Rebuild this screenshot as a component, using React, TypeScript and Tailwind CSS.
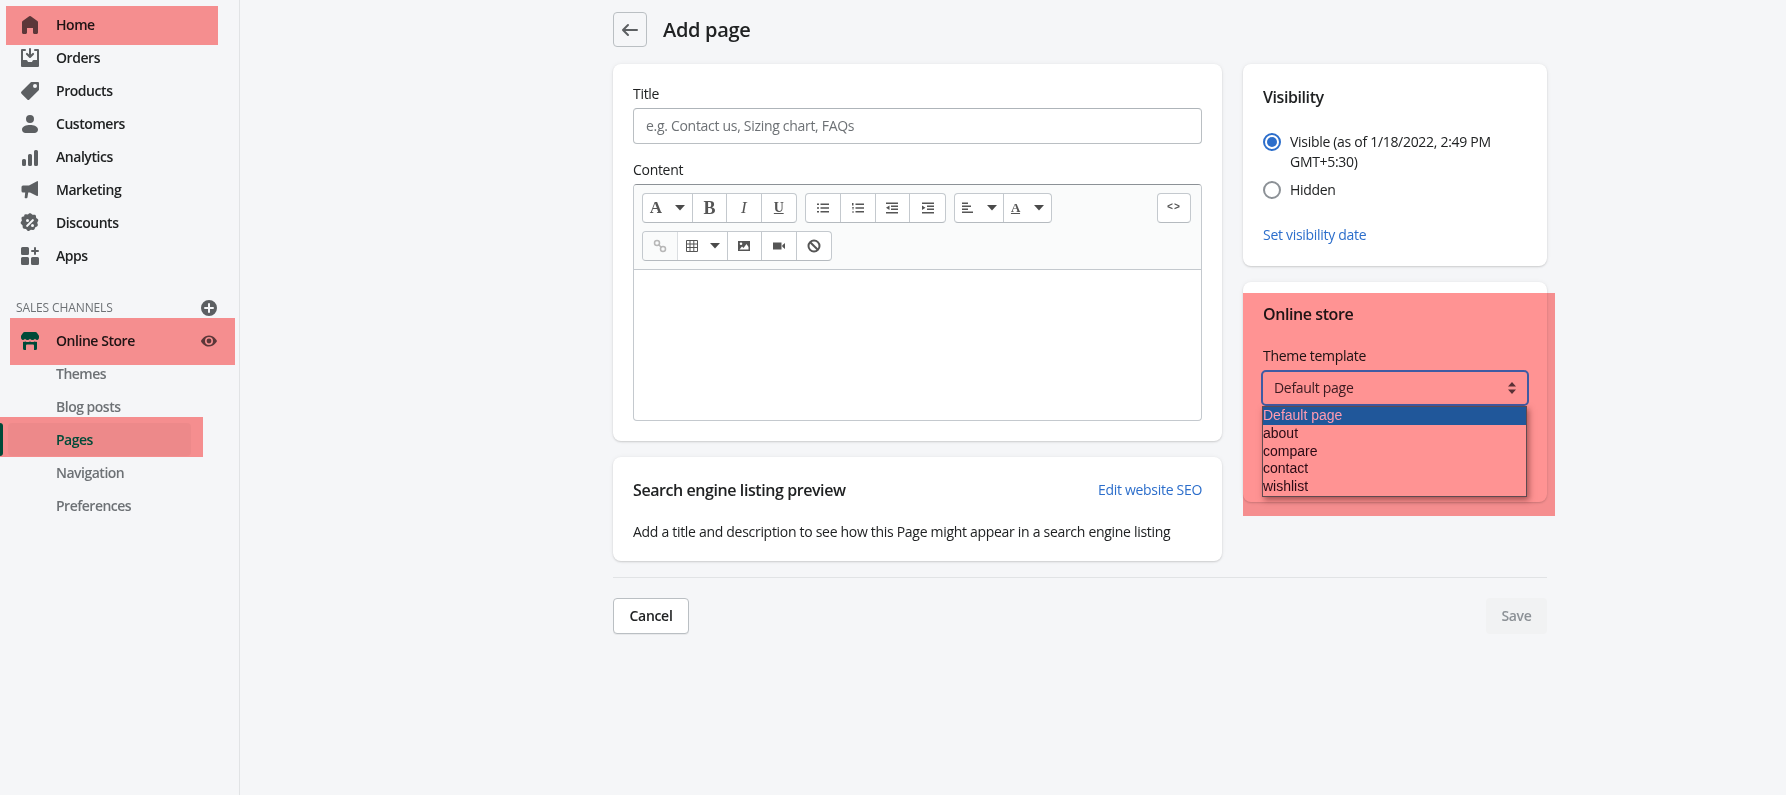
import React from "react";

const Ico = ({ d, className = "text-[#5c5f62]", vb = "0 0 20 20" }: { d: string; className?: string; vb?: string }) => (
  <svg viewBox={vb} className={`w-5 h-5 fill-current shrink-0 ${className}`}>
    <path fillRule="evenodd" d={d} />
  </svg>
);

const icons = {
  home: "M18 7.261V17.5c0 .841-.672 1.5-1.5 1.5h-2c-.828 0-1.5-.659-1.5-1.5V13H7v4.477C7 18.318 6.328 19 5.5 19h-2c-.828 0-1.5-.682-1.5-1.523V7.261a1.5 1.5 0 0 1 .615-1.21l6.59-4.82a1.481 1.481 0 0 1 1.59 0l6.59 4.82A1.5 1.5 0 0 1 18 7.26z",
  orders: "M2 1h3a1 1 0 0 1 0 2H3v9h3.4c.4 0 .7.2.9.6l.7 1.4h4l.7-1.4c.2-.4.5-.6.9-.6H17V3h-2a1 1 0 1 1 0-2h3a1 1 0 0 1 1 1v16a1 1 0 0 1-1 1H2a1 1 0 0 1-1-1V2a1 1 0 0 1 1-1zM6.300 6.700a1 1 0 1 1 1.400-1.400L9 6.600V1a1 1 0 0 1 2 0v5.600l1.300-1.300a1 1 0 1 1 1.400 1.400l-3 3a1 1 0 0 1-1.400 0l-3-3z",
  products: "M11.500 1a1 1 0 0 0-.7.300L1.500 10.600a1.500 1.500 0 0 0 0 2.100l5.800 5.800a1.500 1.500 0 0 0 2.100 0l9.300-9.300a1 1 0 0 0 .3-.7V2a1 1 0 0 0-1-1h-6.500zM15 7a2 2 0 1 1 0-4 2 2 0 0 1 0 4z",
  customers: "M10 9a4 4 0 1 0 0-8 4 4 0 0 0 0 8zM10 11c-3.600 0-8 1.300-8 4.500 0 2 1.500 3.500 3.500 3.500h9c2 0 3.500-1.500 3.500-3.500 0-3.200-4.400-4.500-8-4.500z",
  analytics: "M3.500 12h1A1.500 1.500 0 0 1 6 13.500v4A1.500 1.500 0 0 1 4.500 19h-1A1.500 1.500 0 0 1 2 17.500v-4A1.500 1.500 0 0 1 3.500 12zM9.500 7h1A1.500 1.500 0 0 1 12 8.500v9a1.500 1.500 0 0 1-1.500 1.500h-1A1.500 1.500 0 0 1 8 17.500v-9A1.500 1.500 0 0 1 9.500 7zM15.500 3h1A1.500 1.500 0 0 1 18 4.500v13a1.500 1.500 0 0 1-1.500 1.500h-1a1.500 1.500 0 0 1-1.500-1.500v-13A1.500 1.500 0 0 1 15.500 3z",
  marketing: "M18 1.700V15.300a.7.7 0 0 1-1 .6L10 12.500H8.200L7.500 17.300a1 1 0 0 1-1 .9H5.500a.8.8 0 0 1-.8-1L5.200 12.500H3a1.500 1.500 0 0 1-1.500-1.500V7A1.500 1.500 0 0 1 3 5.500H9L17 1.200a.7.7 0 0 1 1 .5z",
  discounts: "M9 .6c.6-.5 1.400-.5 2 0l1.500 1.200 1.900-.1c.8 0 1.400.5 1.500 1.300l.3 1.900 1.500 1.200c.6.500.8 1.300.4 2L17.200 9.700l.6 1.800c.2.800-.1 1.500-.8 1.900l-1.700.9-.7 1.800c-.3.700-1 1.100-1.800 1l-1.900-.4-1.600 1c-.7.400-1.500.3-2-.3l-1.300-1.400-1.900-.2c-.8-.1-1.300-.7-1.400-1.500l-.1-1.900-1.400-1.300c-.6-.5-.7-1.300-.3-2l1-1.600-.4-1.900c-.2-.8.2-1.500 1-1.800l1.800-.6L4.200 2C4.600 1.300 5.300 1 6 1.200L7.900 1.600 9 .6zM7.500 9a1.500 1.500 0 1 0 0-3 1.500 1.500 0 0 0 0 3zM12.500 14a1.500 1.500 0 1 0 0-3 1.500 1.500 0 0 0 0 3zM13.700 7.700a1 1 0 0 0-1.400-1.400l-6 6a1 1 0 0 0 1.400 1.400l6-6z",
  apps: "M2.500 1h5A1.500 1.500 0 0 1 9 2.500v5A1.500 1.500 0 0 1 7.500 9h-5A1.500 1.500 0 0 1 1 7.500v-5A1.500 1.500 0 0 1 2.500 1zM2.500 11h5A1.500 1.500 0 0 1 9 12.500v5A1.500 1.500 0 0 1 7.500 19h-5A1.500 1.500 0 0 1 1 17.500v-5A1.500 1.500 0 0 1 2.500 11zM12.500 11h5a1.500 1.500 0 0 1 1.500 1.500v5a1.500 1.500 0 0 1-1.500 1.500h-5a1.500 1.500 0 0 1-1.500-1.500v-5a1.500 1.500 0 0 1 1.500-1.500zM15 1a1 1 0 0 1 1 1v2h2a1 1 0 1 1 0 2h-2v2a1 1 0 1 1-2 0V6h-2a1 1 0 1 1 0-2h2V2a1 1 0 0 1 1-1z",
  store: "M4.500 1h11c.5 0 .9.2 1.200.6l2.100 3c.1.200.2.400.2.600V6.500A2.500 2.500 0 0 1 17.500 9 2.800 2.800 0 0 1 15 7.800 2.900 2.900 0 0 1 12.500 9 2.900 2.900 0 0 1 10 7.800 2.900 2.900 0 0 1 7.500 9 2.900 2.900 0 0 1 5 7.800 2.800 2.800 0 0 1 2.500 9 2.500 2.500 0 0 1 1 6.500V5.200c0-.2.100-.4.200-.6l2.100-3c.3-.4.7-.6 1.200-.6zM3 10.800c.9.200 1.700 0 2.500-.4.700.4 1.300.6 2 .6s1.700-.2 2.500-.6c.8.400 1.700.6 2.500.6s1.400-.2 2-.6c.8.400 1.600.6 2.500.4V17.500a1.500 1.500 0 0 1-1.500 1.500H14v-4.500a1 1 0 0 0-1-1H7a1 1 0 0 0-1 1V19H4.500A1.500 1.500 0 0 1 3 17.500v-6.700z",
  eye: "M19.900 9.600C19.700 9.200 16.300 3 10 3S.3 9.200.1 9.600a1 1 0 0 0 0 .9C.3 10.800 3.700 17 10 17s9.700-6.200 9.900-6.600a1 1 0 0 0 0-.8zM10 15a5 5 0 1 1 0-10 5 5 0 0 1 0 10zM10 13a3 3 0 1 0 0-6 3 3 0 0 0 0 6z",
  plus: "M10 18a8 8 0 1 0 0-16 8 8 0 0 0 0 16zM11 6a1 1 0 1 0-2 0v3H6a1 1 0 1 0 0 2h3v3a1 1 0 1 0 2 0v-3h3a1 1 0 1 0 0-2h-3V6z",
  back: "M17 9H5.414l3.293-3.293a.999.999 0 1 0-1.414-1.414l-5 5a.999.999 0 0 0 0 1.414l5 5a.997.997 0 0 0 1.414 0 .999.999 0 0 0 0-1.414L5.414 11H17a1 1 0 1 0 0-2z",
};

const NavItem = ({ icon, label }: { icon: string; label: string }) => (
  <div className="h-[33px] flex items-center pl-5 gap-4 text-[14px] font-semibold text-[#202223] tracking-[-0.45px]">
    <Ico d={icon} />
    <span>{label}</span>
  </div>
);

const SubItem = ({ label }: { label: string }) => (
  <div className="h-[33px] flex items-center pl-14 text-[14px] font-semibold text-[#6d7175] tracking-[-0.5px]">{label}</div>
);

const Caret = () => (
  <svg viewBox="0 0 10 6" className="w-[10px] h-[6px] fill-[#4a4a4a]">
    <path d="M0 0h10L5 5.500z" />
  </svg>
);

const Cell = ({ className, children, disabled }: { className: string; children: React.ReactNode; disabled?: boolean }) => (
  <div className={`h-full flex items-center justify-center border-r last:border-r-0 border-[#c4c9ce] ${disabled ? "bg-[#f7f8f8] opacity-60" : ""} ${className}`}>
    {children}
  </div>
);

const Group = ({ children }: { children: React.ReactNode }) => (
  <div className="h-[30px] flex rounded-[4px] border border-[#c4c9ce] border-b-[#b5babf] bg-white overflow-hidden text-[#5c5f62]">{children}</div>
);

const G = ({ children }: { children: React.ReactNode }) => (
  <svg viewBox="0 0 14 14" className="w-[14px] h-[14px] fill-[#555]">{children}</svg>
);

const Lines = ({ kind }: { kind: "ul" | "ol" | "out" | "in" | "left" }) => (
  <G>
    {kind === "ul" && (
      <path d="M1 2.500h2v1.500H1zM1 6.300h2v1.500H1zM1 10h2v1.500H1zM4.500 2.500H13v1.500H4.500zM4.500 6.300H13v1.500H4.500zM4.500 10H13v1.500H4.500z" />
    )}
    {kind === "ol" && (
      <path d="M1 2h1.500v2.500H1zM1 6h2v.8H1zM1 7.500h2v.8H1zM1 10h2v.6H1zM1 11.200h2v.6H1zM4.500 2.500H13v1.500H4.500zM4.500 6.300H13v1.500H4.500zM4.500 10H13v1.500H4.500z" />
    )}
    {kind === "out" && (
      <path d="M1 1.500h12V3H1zM6 4.500h7V6H6zM6 7.500h7V9H6zM1 11h12v1.500H1zM4.500 4.500v4.500L1 6.800z" />
    )}
    {kind === "in" && (
      <path d="M1 1.500h12V3H1zM6 4.500h7V6H6zM6 7.500h7V9H6zM1 11h12v1.500H1zM1 4.500v4.500l3.500-2.200z" />
    )}
    {kind === "left" && <path d="M1 1.500h6V3H1zM1 4.500h9V6H1zM1 7.500h6V9H1zM1 10.500h11V12H1z" />}
  </G>
);

const serif = "font-['Liberation_Serif',serif] font-bold text-[#555]";

const Toolbar = () => (
  <div className="h-[85px] bg-[#fafbfb] border-b border-[#c4c9ce] pt-2 pl-2 pr-[10px] flex flex-col gap-[8px]">
    <div className="flex justify-between">
      <div className="flex gap-2">
        <Group>
          <Cell className="w-[49.500px] gap-[13px]">
            <span className={`${serif} text-[17px]`}>A</span>
            <Caret />
          </Cell>
          <Cell className="w-[34.500px]"><span className={`${serif} text-[18px]`}>B</span></Cell>
          <Cell className="w-[34.500px]"><span className={`${serif} italic text-[17px] font-normal`}>I</span></Cell>
          <Cell className="w-[34.500px]"><span className={`${serif} underline text-[14px]`}>U</span></Cell>
        </Group>
        <Group>
          <Cell className="w-[34.750px]"><Lines kind="ul" /></Cell>
          <Cell className="w-[34.750px]"><Lines kind="ol" /></Cell>
          <Cell className="w-[34.750px]"><Lines kind="out" /></Cell>
          <Cell className="w-[34.750px]"><Lines kind="in" /></Cell>
        </Group>
        <Group>
          <Cell className="w-[49px] gap-[12px]"><Lines kind="left" /><Caret /></Cell>
          <Cell className="w-[47px] gap-[14px]">
            <span className={`${serif} underline text-[13px]`}>A</span>
            <Caret />
          </Cell>
        </Group>
      </div>
      <Group>
        <Cell className="w-[32px]">
          <span className="font-['Liberation_Mono',monospace] font-bold text-[10px] tracking-[1px] text-[#555]">&lt;&gt;</span>
        </Cell>
      </Group>
    </div>
    <div className="flex">
      <Group>
        <Cell className="w-[34.500px]" disabled>
          <svg viewBox="0 0 14 14" className="w-[14px] h-[14px] fill-none stroke-[#888] stroke-[1.500]">
            <circle cx="4" cy="4" r="2.500" />
            <circle cx="10" cy="10" r="2.500" />
            <path d="M5.500 5.500l3 3" />
          </svg>
        </Cell>
        <Cell className="w-[50px] gap-[11px]">
          <svg viewBox="0 0 14 14" className="w-[14px] h-[14px] fill-none stroke-[#555]">
            <path d="M1.500 1.500h11v11h-11zM1.500 5h11M1.500 8.500h11M5 1.500v11M8.800 1.500v11" />
          </svg>
          <Caret />
        </Cell>
        <Cell className="w-[34.500px]">
          <G>
            <path fillRule="evenodd" d="M1 2h12v10H1zM4 3.500a1.300 1.300 0 1 0 0 2.600 1.300 1.300 0 0 0 0-2.600zM2.500 10.500h9V8L9.500 5 6.500 9 5 7.500z" />
          </G>
        </Cell>
        <Cell className="w-[34.500px]">
          <G><path d="M1 3.500h8.500v7H1zM10.300 6.200L13 4v6l-2.700-2.200z" /></G>
        </Cell>
        <Cell className="w-[34.500px]">
          <svg viewBox="0 0 14 14" className="w-[14px] h-[14px] fill-none stroke-[#555] stroke-[2]">
            <circle cx="7" cy="7" r="5.500" />
            <path d="M3.200 3.200l7.600 7.600" />
          </svg>
        </Cell>
      </Group>
    </div>
  </div>
);

const Card = ({ className, children }: { className: string; children: React.ReactNode }) => (
  <div className={`bg-white rounded-[8px] shadow-[0_0_5px_rgba(23,24,24,0.05),0_1px_2px_rgba(0,0,0,0.15)] ${className}`}>{children}</div>
);

const Radio = ({ checked }: { checked?: boolean }) => (
  <div className={`w-[18px] h-[18px] rounded-full border-2 bg-white flex items-center justify-center shrink-0 mt-px ${checked ? "border-[#2c6ecb]" : "border-[#8c9196]"}`}>
    {checked && <div className="w-[10px] h-[10px] rounded-full bg-[#2c6ecb]" />}
  </div>
);

export default function App() {
  return (
    <div className="relative w-[1786px] h-[795px] overflow-hidden bg-[#f5f6f8] flex font-['Open_Sans',sans-serif] text-[14px] leading-5 text-[#202223] tracking-[-0.3px]">
      <aside className="w-[240px] shrink-0 h-full border-r border-[#e1e3e5] pt-2">
        <NavItem icon={icons.home} label="Home" />
        <NavItem icon={icons.orders} label="Orders" />
        <NavItem icon={icons.products} label="Products" />
        <NavItem icon={icons.customers} label="Customers" />
        <NavItem icon={icons.analytics} label="Analytics" />
        <NavItem icon={icons.marketing} label="Marketing" />
        <NavItem icon={icons.discounts} label="Discounts" />
        <NavItem icon={icons.apps} label="Apps" />
        <div className="h-[52px] flex items-end justify-between pl-4 pr-[20px] pb-[6px] text-[12px] text-[#6d7175] tracking-[-0.12px]">
          <span className="uppercase">Sales channels</span>
          <Ico d={icons.plus} />
        </div>
        <div className="h-[33px] flex items-center pl-5 pr-[20px] gap-4 font-semibold text-[#202223] tracking-[-0.45px]">
          <Ico d={icons.store} className="text-[#008060]" />
          <span className="flex-1">Online Store</span>
          <Ico d={icons.eye} vb="-2.500 -2.500 25 25" />
        </div>
        <SubItem label="Themes" />
        <SubItem label="Blog posts" />
        <div className="relative h-[33px] flex items-center pl-14 font-semibold text-[#008060] tracking-[-0.5px]">
          <div className="absolute left-0 top-0 h-full w-[3px] bg-[#008060] rounded-r-[3px]" />
          <div className="absolute left-2 top-0 h-full w-[183px] bg-[#edeeef] rounded-[4px]" />
          <span className="relative">Pages</span>
        </div>
        <SubItem label="Navigation" />
        <SubItem label="Preferences" />
      </aside>

      <main className="flex-1 pl-[373px] pt-3">
        <div className="w-[934px]">
          <div className="h-[35px] flex items-center gap-[16px]">
            <div className="w-[34px] h-[35px] rounded-[4px] border border-[#babfc3] flex items-center justify-center">
              <Ico d={icons.back} className="text-[#5c5f62]" />
            </div>
            <h1 className="text-[20px] font-semibold leading-7">Add page</h1>
          </div>

          <div className="flex gap-[21px] mt-[17px]">
            <div className="w-[609px] flex flex-col gap-4">
              <Card className="p-5 h-[377px]">
                <label className="block mb-1">Title</label>
                <div className="h-9 rounded-[4px] border border-[#babfc3] border-t-[#aeb4b9] flex items-center px-3 text-[#6d7175] mb-4">
                  e.g. Contact us, Sizing chart, FAQs
                </div>
                <label className="block mb-1">Content</label>
                <div className="h-[237px] rounded-[4px] border border-[#c4c9ce] border-t-[#8c9196] overflow-hidden bg-white">
                  <Toolbar />
                </div>
              </Card>
              <Card className="px-5 pt-[23px] h-[104px]">
                <div className="flex justify-between">
                  <h2 className="font-semibold text-[16px] tracking-[-0.42px]">Search engine listing preview</h2>
                  <span className="text-[#2c6ecb]">Edit website SEO</span>
                </div>
                <p className="mt-[22px]">Add a title and description to see how this Page might appear in a search engine listing</p>
              </Card>
            </div>

            <div className="w-[304px] flex flex-col gap-4">
              <Card className="px-5 pt-[23px] h-[202px]">
                <h2 className="font-semibold text-[16px] tracking-[-0.42px]">Visibility</h2>
                <div className="mt-[25px] flex gap-[9px]">
                  <Radio checked />
                  <span>Visible (as of 1/18/2022, 2:49 PM GMT+5:30)</span>
                </div>
                <div className="mt-2 flex gap-[9px]">
                  <Radio />
                  <span>Hidden</span>
                </div>
                <div className="mt-[25px] text-[#2c6ecb]">Set visibility date</div>
              </Card>
              <Card className="px-5 pt-[22px] h-[220px]">
                <h2 className="font-semibold text-[16px] tracking-[-0.42px]">Online store</h2>
                <div className="mt-[22px] mb-1">Theme template</div>
                <div className="relative z-20 h-9 -mx-[2px] rounded-[5px] border-2 border-[#3f5ba3] flex items-center justify-between pl-[11px] pr-[10px] text-[#3a1a20]">
                  <span>Default page</span>
                  <svg viewBox="0 0 10 14" className="w-[10px] h-[14px] fill-[#5a3035]">
                    <path d="M5 1l4 4.500H1zM5 13L1 8.500h8z" />
                  </svg>
                </div>
              </Card>
            </div>
          </div>

          <div className="mt-4 border-t border-[#e1e3e5] pt-5 flex justify-between">
            <div className="w-[76px] h-9 rounded-[4px] bg-white border border-[#babfc3] flex items-center justify-center font-semibold shadow-[0_1px_0_rgba(0,0,0,0.05)]">Cancel</div>
            <div className="w-[61px] h-9 rounded-[4px] bg-[#f1f2f3] flex items-center justify-center font-semibold text-[#8c9196]">Save</div>
          </div>
        </div>
      </main>

      <div className="absolute left-[6px] top-[6px] w-[212px] h-[39px] bg-[#ff9393] mix-blend-multiply" />
      <div className="absolute left-[10px] top-[318px] w-[225px] h-[47px] bg-[#ff9393] mix-blend-multiply" />
      <div className="absolute left-0 top-[417px] w-[203px] h-[40px] bg-[#ff9393] mix-blend-multiply" />
      <div className="absolute left-[1243px] top-[293px] w-[312px] h-[223px] bg-[#ff9393] mix-blend-multiply" />

      <div className="absolute z-30 left-[1262px] top-[406px] w-[265px] h-[91px] bg-[#ff9393] border border-[#5f4a50] shadow-[2px_3px_6px_rgba(80,20,20,0.5)] font-['Liberation_Sans',sans-serif] text-[14px] leading-[17.500px] tracking-normal text-[#2a0a14]">
        <div className="h-[18px] bg-[#20579a] text-[#ff9bb0]">Default page</div>
        <div>about</div>
        <div>compare</div>
        <div>contact</div>
        <div>wishlist</div>
      </div>
    </div>
  );
}
